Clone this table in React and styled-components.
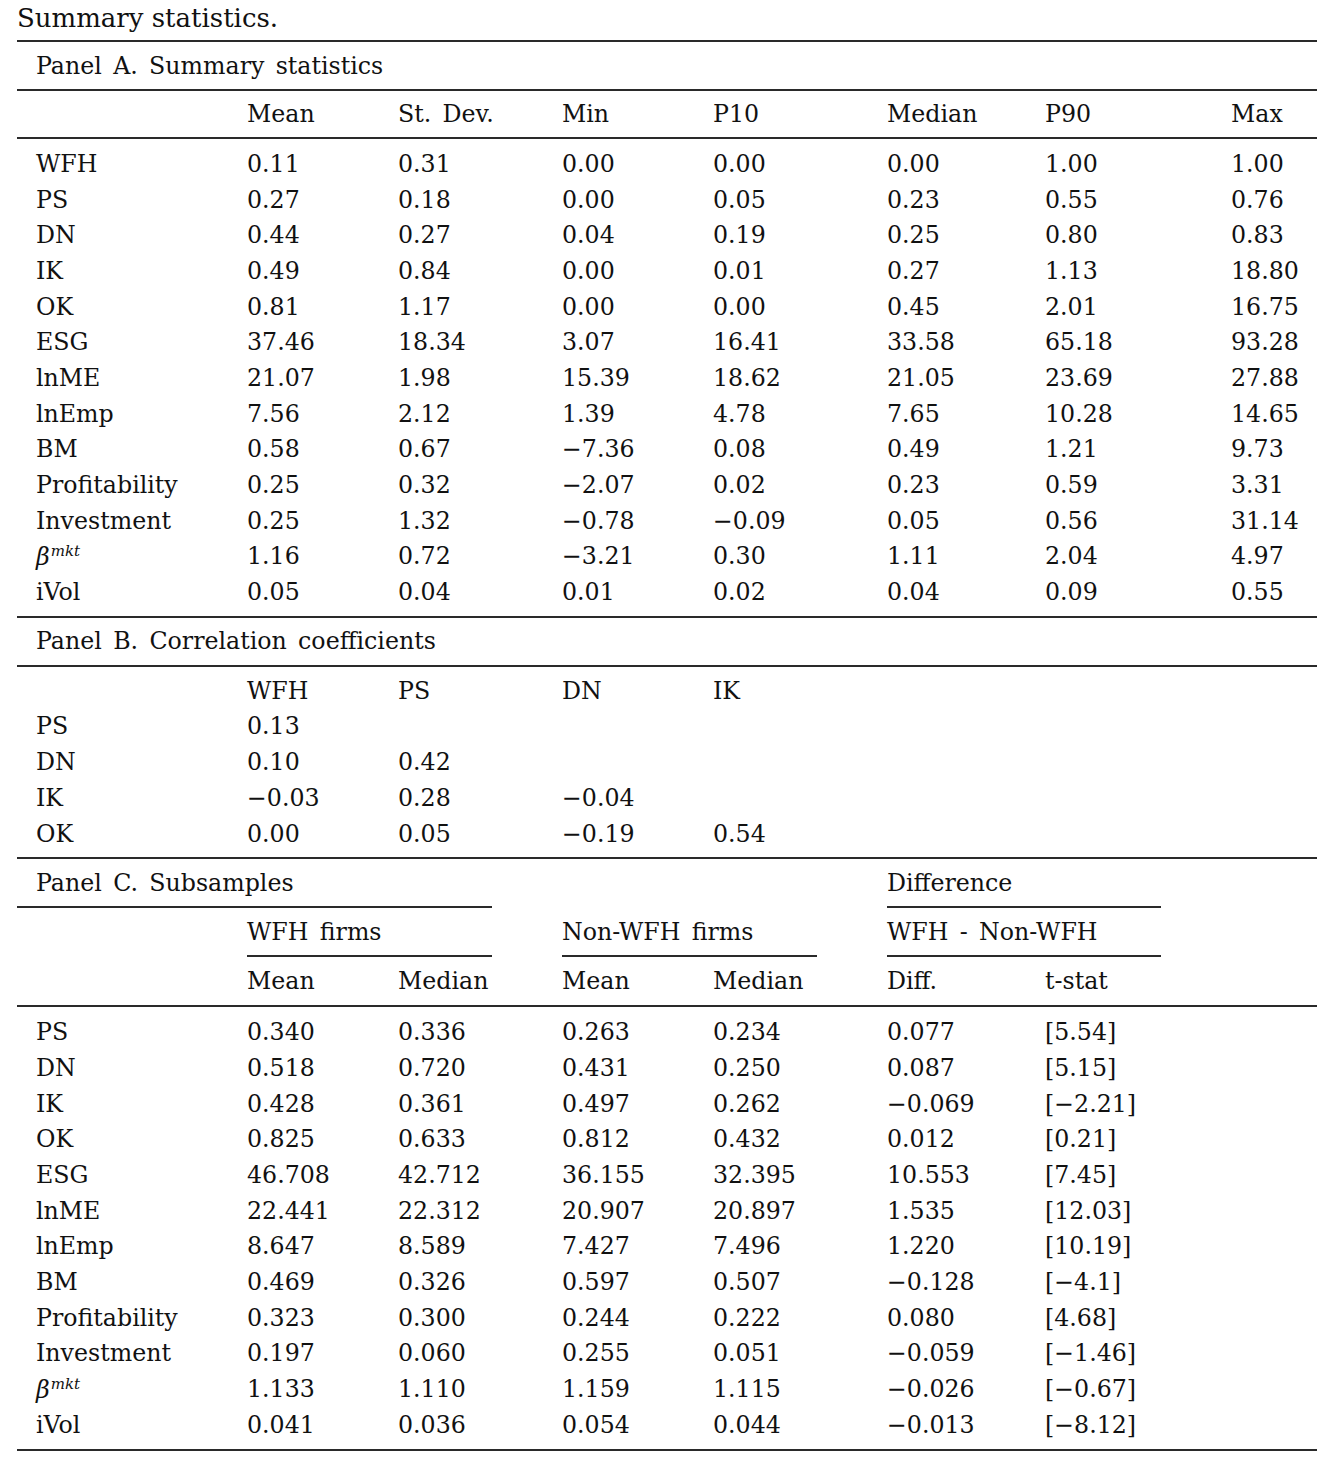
import React from 'react';
import styled, { createGlobalStyle } from 'styled-components';

const Global = createGlobalStyle`
  html, body { margin: 0; padding: 0; background: #fff; }
`

const Page = styled.div`
  width: 1300px;
  padding: 0 17px;
  font-family: "DejaVu Serif", "Liberation Serif", serif;
  font-size: 23.7px;
  color: #111;
  overflow: hidden;
  height: 1467px;
`

const Title = styled.div`
  height: 40px;
  font-size: 26px;
  line-height: 30px;
  padding-top: 3px;
  box-sizing: border-box;
`

const Rule = styled.div`
  height: 2px;
  background: #2a2a2a;
  grid-column: ${p => p.$col || '1 / -1'};
  margin-right: ${p => p.$trim || 0}px;
  visibility: ${p => (p.$blank ? 'hidden' : 'visible')};
`

const Grid = styled.div`
  display: grid;
  grid-template-columns: 230px 151px 164px 151px 174px 158px 186px 86px;
  padding: ${p => p.$pad || '0'};
`

const Cell = styled.div`
  height: ${p => p.$h || 35.7}px;
  display: flex;
  align-items: center;
  white-space: nowrap;
  word-spacing: 0.16em;
  grid-column: ${p => p.$col || 'auto'};
  padding-left: ${p => (p.$label ? 19 : 0)}px;
`

const Beta = styled.span`
  font-style: italic;
  sup {
    font-size: 15px;
    vertical-align: 9px;
    margin-left: 1px;
  }
`

const Notes = styled.p`
  margin: 12px 0 0;
  color: #333;
  font-size: 23.7px;
  line-height: 30px;
  word-spacing: 0.3em;
`

const beta = <Beta>β<sup>mkt</sup></Beta>

const panelA = [
  ['WFH', '0.11', '0.31', '0.00', '0.00', '0.00', '1.00', '1.00'],
  ['PS', '0.27', '0.18', '0.00', '0.05', '0.23', '0.55', '0.76'],
  ['DN', '0.44', '0.27', '0.04', '0.19', '0.25', '0.80', '0.83'],
  ['IK', '0.49', '0.84', '0.00', '0.01', '0.27', '1.13', '18.80'],
  ['OK', '0.81', '1.17', '0.00', '0.00', '0.45', '2.01', '16.75'],
  ['ESG', '37.46', '18.34', '3.07', '16.41', '33.58', '65.18', '93.28'],
  ['lnME', '21.07', '1.98', '15.39', '18.62', '21.05', '23.69', '27.88'],
  ['lnEmp', '7.56', '2.12', '1.39', '4.78', '7.65', '10.28', '14.65'],
  ['BM', '0.58', '0.67', '−7.36', '0.08', '0.49', '1.21', '9.73'],
  ['Profitability', '0.25', '0.32', '−2.07', '0.02', '0.23', '0.59', '3.31'],
  ['Investment', '0.25', '1.32', '−0.78', '−0.09', '0.05', '0.56', '31.14'],
  [beta, '1.16', '0.72', '−3.21', '0.30', '1.11', '2.04', '4.97'],
  ['iVol', '0.05', '0.04', '0.01', '0.02', '0.04', '0.09', '0.55'],
]

const panelB = [
  ['', 'WFH', 'PS', 'DN', 'IK', '', '', ''],
  ['PS', '0.13', '', '', '', '', '', ''],
  ['DN', '0.10', '0.42', '', '', '', '', ''],
  ['IK', '−0.03', '0.28', '−0.04', '', '', '', ''],
  ['OK', '0.00', '0.05', '−0.19', '0.54', '', '', ''],
]

const panelC = [
  ['PS', '0.340', '0.336', '0.263', '0.234', '0.077', '[5.54]', ''],
  ['DN', '0.518', '0.720', '0.431', '0.250', '0.087', '[5.15]', ''],
  ['IK', '0.428', '0.361', '0.497', '0.262', '−0.069', '[−2.21]', ''],
  ['OK', '0.825', '0.633', '0.812', '0.432', '0.012', '[0.21]', ''],
  ['ESG', '46.708', '42.712', '36.155', '32.395', '10.553', '[7.45]', ''],
  ['lnME', '22.441', '22.312', '20.907', '20.897', '1.535', '[12.03]', ''],
  ['lnEmp', '8.647', '8.589', '7.427', '7.496', '1.220', '[10.19]', ''],
  ['BM', '0.469', '0.326', '0.597', '0.507', '−0.128', '[−4.1]', ''],
  ['Profitability', '0.323', '0.300', '0.244', '0.222', '0.080', '[4.68]', ''],
  ['Investment', '0.197', '0.060', '0.255', '0.051', '−0.059', '[−1.46]', ''],
  [beta, '1.133', '1.110', '1.159', '1.115', '−0.026', '[−0.67]', ''],
  ['iVol', '0.041', '0.036', '0.054', '0.044', '−0.013', '[−8.12]', ''],
]

function Rows({ data }) {
  return data.map((row, i) =>
    row.map((v, j) => (
      <Cell key={i + '-' + j} $label={j === 0}>{v}</Cell>
    ))
  )
}

function PanelTitle({ children }) {
  return (
    <Grid>
      <Cell $label $h={47} $col="1 / -1">{children}</Cell>
    </Grid>
  )
}

export default function App() {
  return (
    <Page>
      <Global />
      <Title>Summary statistics.</Title>
      <Rule />
      <PanelTitle>Panel A. Summary statistics</PanelTitle>
      <Rule />
      <Grid>
        <Cell $label $h={46} />
        {['Mean', 'St. Dev.', 'Min', 'P10', 'Median', 'P90', 'Max'].map(h => (
          <Cell key={h} $h={46}>{h}</Cell>
        ))}
      </Grid>
      <Rule />
      <Grid $pad="7px 0 6px">
        <Rows data={panelA} />
      </Grid>
      <Rule />
      <PanelTitle>Panel B. Correlation coefficients</PanelTitle>
      <Rule />
      <Grid $pad="6px 0 6px">
        <Rows data={panelB} />
      </Grid>
      <Rule />
      <Grid>
        <Cell $label $h={47} $col="1 / 6">Panel C. Subsamples</Cell>
        <Cell $h={47} $col="6 / -1">Difference</Cell>
        <Rule $col="1 / 4" $trim={70} />
        <Rule $col="4 / 6" $blank />
        <Rule $col="6 / 8" $trim={70} />
        <Rule $col="8 / -1" $blank />
        <Cell $label $h={47} />
        <Cell $h={47} $col="2 / 4">WFH firms</Cell>
        <Cell $h={47} $col="4 / 6">Non-WFH firms</Cell>
        <Cell $h={47} $col="6 / -1">WFH - Non-WFH</Cell>
        <Rule $col="1 / 2" $blank />
        <Rule $col="2 / 4" $trim={70} />
        <Rule $col="4 / 6" $trim={70} />
        <Rule $col="6 / 8" $trim={70} />
        <Rule $col="8 / -1" $blank />
        <Cell $label $h={48} />
        {['Mean', 'Median', 'Mean', 'Median', 'Diff.', 't-stat', ''].map((h, i) => (
          <Cell key={i} $h={48}>{h}</Cell>
        ))}
      </Grid>
      <Rule />
      <Grid $pad="7px 0 6px">
        <Rows data={panelC} />
      </Grid>
      <Rule />
      <Notes>Notes. This table reports the summary statistics of the variables used in the analysis.</Notes>
    </Page>
  );
}
